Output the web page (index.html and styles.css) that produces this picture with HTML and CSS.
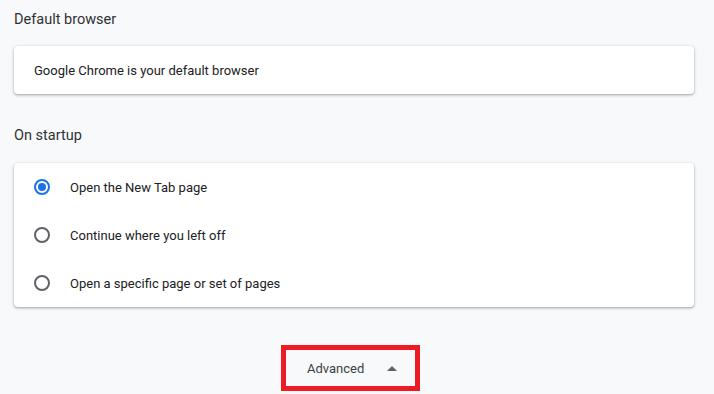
FILE: index.html
```html
<!DOCTYPE html>
<html lang="en">
<head>
    <meta charset="UTF-8">
    <title>Settings</title>
    <link rel="stylesheet" href="styles.css">
</head>
<body>
    <div class="page">
        <h2 class="section-title first">Default browser</h2>
        <div class="card">
            <div class="row">Google Chrome is your default browser</div>
        </div>

        <h2 class="section-title">On startup</h2>
        <div class="card">
            <label class="row radio-row">
                <span class="radio checked"></span>
                <span>Open the New Tab page</span>
            </label>
            <label class="row radio-row">
                <span class="radio"></span>
                <span>Continue where you left off</span>
            </label>
            <label class="row radio-row">
                <span class="radio"></span>
                <span>Open a specific page or set of pages</span>
            </label>
        </div>

        <div class="advanced-wrap">
            <div class="advanced">
                <span>Advanced</span>
                <svg class="arrow" width="10" height="5" viewBox="0 0 10 5"><path d="M0 5 L5 0 L10 5 Z" fill="#5f6368"/></svg>
            </div>
        </div>
    </div>
</body>
</html>
```

FILE: styles.css
```css
/* Estilos da página de configurações */
body {
    font-family: Roboto, "Liberation Sans", Arial, sans-serif;
    background-color: #f8f9fa;
    color: #202124;
    margin: 0;
    padding: 0;
}

.page {
    padding: 0 20px 0 14px;
}

.section-title {
    font-size: 14.5px;
    font-weight: 400;
    margin: 0;
    padding: 32px 0 17px;
    line-height: 20px;
    color: #303134;
}

.section-title.first {
    padding-top: 10px;
    padding-bottom: 16px;
}

.card {
    background-color: white;
    border-radius: 4px;
    box-shadow: 0 1px 2px rgba(60, 64, 67, 0.3), 0 1px 3px 1px rgba(60, 64, 67, 0.15);
}

.row {
    height: 48px;
    display: flex;
    align-items: center;
    padding: 0 20px;
    font-size: 13px;
}

.radio-row {
    padding-left: 20px;
}

.radio {
    width: 16px;
    height: 16px;
    box-sizing: border-box;
    border: 2px solid #5f6368;
    border-radius: 50%;
    margin-right: 20px;
    position: relative;
    flex-shrink: 0;
}

.radio.checked {
    border-color: #1a73e8;
}

.radio.checked::after {
    content: "";
    position: absolute;
    top: 2px;
    left: 2px;
    width: 8px;
    height: 8px;
    border-radius: 50%;
    background-color: #1a73e8;
}

.advanced-wrap {
    display: flex;
    padding-top: 38px;
    padding-left: 267px;
}

.advanced {
    width: 139px;
    height: 46px;
    box-sizing: border-box;
    border: 5px solid #ed1c24;
    display: flex;
    align-items: center;
    padding-left: 21px;
    font-size: 13px;
    color: #3c4043;
}

.arrow {
    margin-left: 23px;
}
```
